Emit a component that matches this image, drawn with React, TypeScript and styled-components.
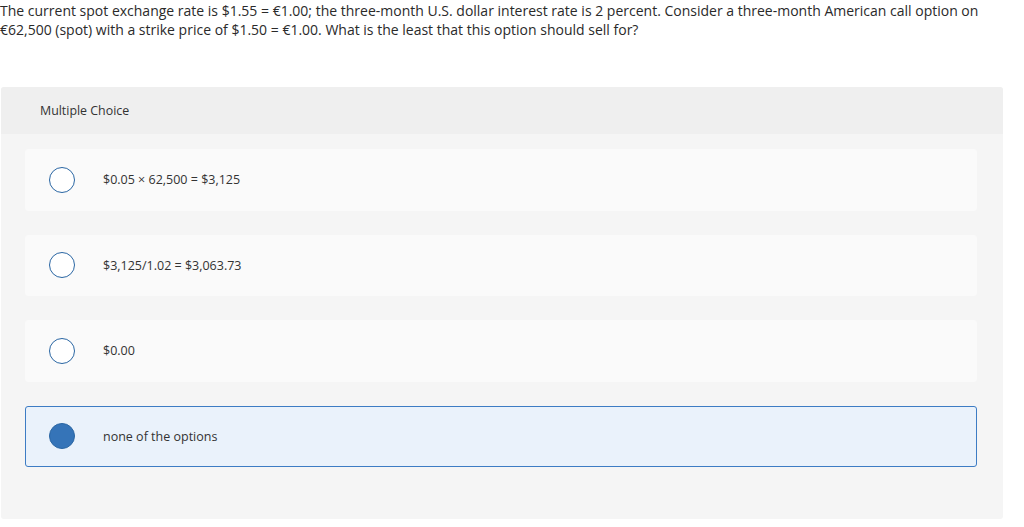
import { FC } from 'react';
import styled, { createGlobalStyle } from 'styled-components';

const GlobalStyle = createGlobalStyle`
  body {
    margin: 0;
    background: #fff;
    font-family: 'Open Sans', 'Lato', sans-serif;
    color: #333;
  }
`;

const options = [
  '$0.05 × 62,500 = $3,125',
  '$3,125/1.02 = $3,063.73',
  '$0.00',
  'none of the options',
];

const selectedIndex = 3;

type optionProps = {
  label: string;
  selected: boolean;
};

const Option: FC<optionProps> = ({ label, selected }) => (
  <Card $selected={selected}>
    <Radio $selected={selected} />
    <Label>{label}</Label>
  </Card>
);

export default function App() {
  return (
    <>
      <GlobalStyle />
      <Question>
        The current spot exchange rate is $1.55 = €1.00; the three-month U.S. dollar interest rate is 2 percent.
        Consider a three-month American call option on €62,500 (spot) with a strike price of $1.50 = €1.00. What is
        the least that this option should sell for?
      </Question>
      <Panel>
        <Header>Multiple Choice</Header>
        <List>
          {options.map((label, i) => (
            <Option key={label} label={label} selected={i === selectedIndex} />
          ))}
        </List>
      </Panel>
    </>
  );
}

const Question = styled.p`
  margin: 0;
  padding-top: 1px;
  max-width: 992px;
  font-size: 14px;
  line-height: 19px;
  color: #2a2a2a;
`;

const Panel = styled.section`
  margin: 48px 21px 0 1px;
  background: #f5f5f5;
  border-radius: 3px;
  padding-bottom: 52px;
`;

const Header = styled.div`
  height: 47px;
  display: flex;
  align-items: center;
  padding-left: 39px;
  background: #efefef;
  border-radius: 3px 3px 0 0;
  font-size: 12.4px;
  color: #333;
`;

const List = styled.div`
  display: flex;
  flex-direction: column;
  gap: 24px;
  padding: 15px 26px 0 24px;
`;

const Card = styled.div<{ $selected: boolean }>`
  box-sizing: border-box;
  height: 61.5px;
  display: flex;
  align-items: center;
  padding-left: 23px;
  border-radius: 3px;
  background: ${(p) => (p.$selected ? '#eaf2fb' : '#fafafa')};
  border: 1px solid ${(p) => (p.$selected ? '#3d7cc4' : '#fafafa')};
`;

const Radio = styled.span<{ $selected: boolean }>`
  box-sizing: border-box;
  flex: none;
  width: 26px;
  height: 26px;
  border-radius: 50%;
  border: 1.3px solid #2a66a3;
  background: ${(p) => (p.$selected ? '#3574b8' : '#fff')};
`;

const Label = styled.span`
  margin-left: 28px;
  font-size: 12.5px;
  color: #333;
`;
